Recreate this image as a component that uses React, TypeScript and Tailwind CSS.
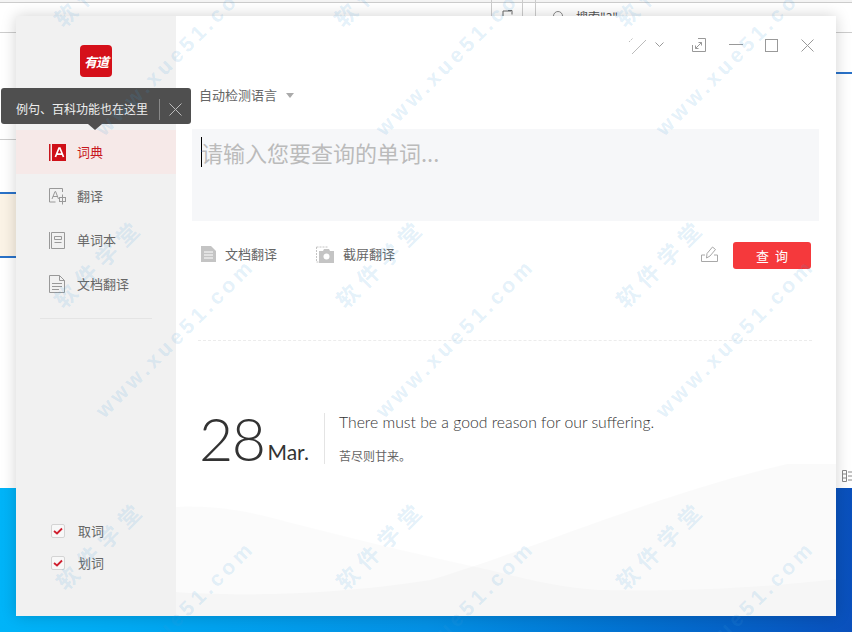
import React from 'react';

const CJK = "font-['Noto_Sans_CJK_SC','Liberation_Sans',sans-serif]";

const watermarks = [
  { x: 175, y: 56, text: 'www.xue51.com' }, { x: 455, y: 56, text: 'www.xue51.com' }, { x: 735, y: 56, text: 'www.xue51.com' },
  { x: 175, y: 338, text: 'www.xue51.com' }, { x: 455, y: 338, text: 'www.xue51.com' }, { x: 735, y: 338, text: 'www.xue51.com' },
  { x: 175, y: 620, text: 'www.xue51.com' }, { x: 455, y: 620, text: 'www.xue51.com' }, { x: 735, y: 620, text: 'www.xue51.com' },
  { x: 98, y: -19, text: '软件学堂' }, { x: 378, y: -19, text: '软件学堂' }, { x: 660, y: -19, text: '软件学堂' },
  { x: 98, y: 262, text: '软件学堂' }, { x: 380, y: 262, text: '软件学堂' }, { x: 660, y: 262, text: '软件学堂' },
  { x: 100, y: 544, text: '软件学堂' }, { x: 380, y: 544, text: '软件学堂' }, { x: 660, y: 544, text: '软件学堂' },
];

const DictIcon = () => (
  <svg width="17" height="17" viewBox="0 0 17 17">
    <rect x="0" y="0" width="1.5" height="17" fill="#c8161d" />
    <rect x="3" y="0" width="14" height="17" fill="#cf1018" />
    <path d="M6.4 13 10 4h.9l3.6 9M7.6 10.2h5.7" stroke="#fff" strokeWidth="1.7" fill="none" />
  </svg>
);

const TranslateIcon = () => (
  <svg width="17" height="17" viewBox="0 0 17 17" fill="none" stroke="#999" strokeWidth="1">
    <path d="M13.5 4V.5H.5v13.5h6" />
    <path d="M3 11 6 3.5h.6L9.500 11M4 8.500h4.500" />
    <rect x="10.500" y="9.500" width="6" height="4" />
    <path d="M13.500 6.500v10" />
  </svg>
);

const BookIcon = () => (
  <svg width="16" height="17" viewBox="0 0 16 17" fill="none" stroke="#999" strokeWidth="1">
    <path d="M.5 0v17M2.500.5h13v16h-13z" />
    <path d="M5.500 4.500h7v3h-7zM5.500 10.500h7" />
  </svg>
);

const DocIcon = () => (
  <svg width="16" height="18" viewBox="0 0 16 18" fill="none" stroke="#999" strokeWidth="1">
    <path d="M.5.5h10l5 5v12H.5z" />
    <path d="M10.500.5v5h5M3 8.500h10M3 11.500h10M3 14.500h7" />
  </svg>
);

const navItems = [
  { label: '词典', icon: <DictIcon />, active: true },
  { label: '翻译', icon: <TranslateIcon />, active: false },
  { label: '单词本', icon: <BookIcon />, active: false },
  { label: '文档翻译', icon: <DocIcon />, active: false },
];

const Check = ({ label }: { label: string }) => (
  <div className="flex h-8 items-center">
    <span className="flex h-[14px] w-[14px] items-center justify-center rounded-[2px] border border-[#d4d4d4] bg-[#f8f8f8]">
      <svg width="10" height="8" viewBox="0 0 10 8" fill="none">
        <path d="M1 4l3 2.500L9 1.500" stroke="#cf1f2e" strokeWidth="1.8" />
      </svg>
    </span>
    <span className="ml-[13px] text-[13px] text-[#666]">{label}</span>
  </div>
);

const Sidebar = () => (
  <aside className="relative flex h-full w-40 shrink-0 flex-col bg-[#f1f1f1]">
    <div className="flex justify-center pt-[29px]">
      <div className="flex h-8 w-8 items-center justify-center rounded-[4px] bg-[#d5101a]">
        <span className="text-[13px] font-bold italic leading-none tracking-[-1px] text-white">有道</span>
      </div>
    </div>

    {/* tip bubble */}
    <div className="absolute left-[-15px] top-[72px] z-10 flex h-9 w-[190px] items-center rounded-[3px] bg-[#4f4f4f] pl-[15px] pt-[6px]">
      <span className="w-[133px] whitespace-nowrap text-xs text-[#eee]">例句、百科功能也在这里</span>
      <span className="ml-[10px] h-[21px] w-px bg-[#888]" />
      <svg className="ml-[9px]" width="13" height="13" viewBox="0 0 13 13" stroke="#bbb" strokeWidth="1">
        <path d="M.5.500l12 12M12.500.500l-12 12" />
      </svg>
      <span className="absolute left-[87px] top-9 h-0 w-0 border-x-[7px] border-t-[6px] border-x-transparent border-t-[#4f4f4f]" />
    </div>

    <nav className="mt-[53px] flex flex-col">
      {navItems.map((item) => (
        <div
          key={item.label}
          className={`flex h-11 items-center pl-[33px] ${item.active ? 'bg-[#f6e9e8] text-[#c8161d]' : 'text-[#666]'}`}
        >
          <span className="flex w-[28px] items-center">{item.icon}</span>
          <span className="text-[13px]">{item.label}</span>
        </div>
      ))}
    </nav>

    <div className="mx-6 mt-3 h-px bg-[#e4e4e4]" />

    <div className="mt-auto flex flex-col pb-[37px] pl-[35px]">
      <Check label="取词" />
      <Check label="划词" />
    </div>
  </aside>
);

const TitleBar = () => (
  <div className="flex h-[44px] items-start justify-end pr-[22px] pt-[19px]">
    <div className="flex items-center">
      <svg width="20" height="20" viewBox="0 0 20 20" fill="none" stroke="#bbb" strokeWidth="1">
        <path d="M1 7l4-4" strokeDasharray="1.500 1" />
        <path d="M4 19L18 5" />
      </svg>
      <svg className="ml-[7px]" width="9" height="6" viewBox="0 0 9 6" fill="none" stroke="#999" strokeWidth="1">
        <path d="M.5.500l4 4 4-4" />
      </svg>
      <svg className="ml-[28px]" width="14" height="14" viewBox="0 0 14 14" fill="none" stroke="#999" strokeWidth="1">
        <path d="M6 .5h7.500V13.500H.5V7" />
        <path d="M9.500 4.500l-6 6" />
        <path d="M9.500 4.500h-3M9.500 4.500v3M3.500 10.500h3M3.500 10.500v-3" />
      </svg>
      <svg className="ml-[23px]" width="14" height="14" viewBox="0 0 14 14" stroke="#999" strokeWidth="1">
        <path d="M0 6.500h14" />
      </svg>
      <svg className="ml-[22px]" width="13" height="13" viewBox="0 0 13 13" fill="none" stroke="#999" strokeWidth="1">
        <rect x=".5" y=".5" width="12" height="12" />
      </svg>
      <svg className="ml-[23px]" width="13" height="13" viewBox="0 0 13 13" stroke="#999" strokeWidth="1">
        <path d="M.5.500l12 12M12.500.500l-12 12" />
      </svg>
    </div>
  </div>
);

const Waves = () => (
  <svg className="absolute bottom-0 left-0" width="660" height="152" viewBox="0 0 660 152">
    <path d="M0 128C60 132 150 132 254 116C350 88 480 30 611 0H660V152H0Z" fill="#000" fillOpacity="0.018" />
    <path d="M0 43C50 40 90 52 124 61C190 78 250 92 314 106C360 118 400 126 431 126C520 128 600 122 660 115V152H0Z" fill="#000" fillOpacity="0.014" />
  </svg>
);

const Main = () => (
  <main className="relative flex h-full flex-1 flex-col overflow-hidden bg-white">
    <Waves />
    <div className="relative flex flex-col">
      <TitleBar />

      <div className="ml-[23px] mt-[25px] flex h-[20px] items-center">
        <span className="text-[13px] text-[#666]">自动检测语言</span>
        <span className="ml-[9px] h-0 w-0 border-x-4 border-t-[5px] border-x-transparent border-t-[#aaa]" />
      </div>

      <div className="ml-4 mr-[17px] mt-[24px] flex h-[92px] items-start bg-[#f6f7f9] pl-[9px] pt-2">
        <span className="h-[30px] w-px bg-black" />
        <span className="ml-[-1px] text-[22px] leading-[30px] text-[#bbb]">请输入您要查询的单词...</span>
      </div>

      <div className="mx-[25px] mt-[21px] flex h-[27px] items-center">
        <div className="flex items-center pb-[3px]">
          <svg width="15" height="16" viewBox="0 0 15 16">
            <path d="M0 0h10l5 5v11H0z" fill="#c4c4c4" />
            <path d="M3 6h9M3 9h9M3 12h9" stroke="#fff" strokeWidth="1" />
          </svg>
          <span className="ml-[9px] text-[13px] text-[#666]">文档翻译</span>
          <svg className="ml-[39px]" width="18" height="17" viewBox="0 0 18 17">
            <path d="M.5 1h12M.5 1v15h3" stroke="#c4c4c4" strokeWidth="1" strokeDasharray="2 1" fill="none" />
            <path d="M3 5h4l1-2h5l1 2h4v12H3z" fill="#c4c4c4" />
            <circle cx="10.500" cy="10.500" r="3" fill="#fff" />
          </svg>
          <span className="ml-[9px] text-[13px] text-[#666]">截屏翻译</span>
        </div>
        <div className="ml-auto flex items-center">
          <svg className="mb-[3px]" width="17" height="16" viewBox="0 0 17 16" fill="none" stroke="#a8a8a8" strokeWidth="1">
            <path d="M4 9H.5v6.500h16V9H13" />
            <path d="M5.500 12L6 7.500 11.500 1l3 2.500L9 10z" />
          </svg>
          <button className="ml-[15px] flex h-[27px] w-[78px] items-center justify-center rounded-[3px] bg-[#f5393c] text-[13px] text-white">
            查&nbsp;&nbsp;询
          </button>
        </div>
      </div>

      <div className="ml-[22px] mr-6 mt-[71px] border-t border-dashed border-[#ececec]" />

      <div className="ml-6 mt-[72px] flex items-start">
        <div className="flex h-[51px] w-[124px] items-end font-['Lato',sans-serif] text-[#333]">
          <span className="ml-[-1px] text-[59px] font-light leading-[51px] tracking-[-1.5px]">28</span>
          <span className="mb-[-3px] ml-[3px] text-[21px] leading-[30px]">Mar.</span>
        </div>
        <div className="h-[51px] w-px bg-[#e4e4e4]" />
        <div className="ml-[14px] mt-[-1px] flex flex-col">
          <span className="font-['Lato',sans-serif] text-[15.75px] font-light leading-5 text-[#333]">There must be a good reason for our suffering.</span>
          <span className="mt-[15px] text-xs leading-[18px] text-[#666]">苦尽则甘来。</span>
        </div>
      </div>
    </div>
  </main>
);

// what shows behind the floating window
const Desktop = () => (
  <div className="absolute inset-0 flex flex-col">
    <div className="relative h-[488px] bg-white">
      <div className="h-[3px] border-b border-[#ccc] bg-[#f4f4f4]" />
      <div className="absolute left-0 top-8 h-px w-4 bg-[#ccc]" />
      <div className="absolute right-0 top-8 h-px w-4 bg-[#ccc]" />
      <div className="absolute left-0 top-[139px] h-px w-4 bg-[#ccc]" />
      <div className="absolute left-0 top-[192px] h-[66px] w-4 border-y-2 border-[#2a72c8] bg-[#fbf3e6]" />
      <div className="absolute right-0 top-[72px] h-[50px] w-4 border-t-2 border-[#2a72c8] bg-white" />
      <div className="absolute left-[491px] top-0 h-4 w-8 border-x border-[#ccc]" />
      <div className="absolute left-[535px] top-0 h-4 w-[317px] border-l border-[#ccc]" />
      <div className="absolute left-[553px] top-[11px] h-[10px] w-[10px] rounded-full border border-[#888]" />
      <span className="absolute left-[576px] top-[9px] text-xs leading-4 text-[#555]">搜索"3"</span>
      <svg className="absolute left-[502px] top-[10px]" width="12" height="6" viewBox="0 0 12 6" fill="none" stroke="#666" strokeWidth="1">
        <path d="M1 6V1h8M6 .5h4v4" />
      </svg>
      <svg className="absolute right-0 top-[469px]" width="10" height="14" viewBox="0 0 10 14" fill="none" stroke="#888" strokeWidth="1">
        <path d="M.5 1.500h4v11h-4zM.5 5h4M.5 9h4M6 3h4M6 7h4M6 11h4" />
      </svg>
    </div>
    <div className="flex-1 bg-gradient-to-r from-[#00b4f8] via-[#0490e4] to-[#0a50bc]" />
  </div>
);

export default function App() {
  return (
    <div className={`relative h-[632px] w-[852px] overflow-hidden ${CJK}`}>
      <Desktop />
      <div className="absolute left-4 top-4 flex h-[600px] w-[820px] shadow-[0_0_14px_rgba(0,0,0,0.18)]">
        <Sidebar />
        <Main />
      </div>
      {watermarks.map((w, i) => (
        <span
          key={i}
          className={`pointer-events-none absolute z-20 -translate-x-1/2 -translate-y-1/2 -rotate-45 whitespace-nowrap font-bold text-[#3d9bdc]/15 ${
            w.text === '软件学堂' ? 'text-[22px] tracking-[7px]' : "font-['Liberation_Sans',sans-serif] text-[21px] tracking-[4px]"
          }`}
          style={{ left: w.x, top: w.y }}
        >
          {w.text}
        </span>
      ))}
    </div>
  );
}
